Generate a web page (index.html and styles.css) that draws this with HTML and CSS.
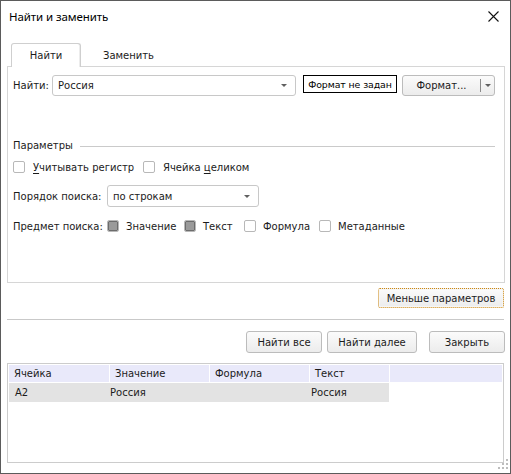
FILE: index.html
```html
<!DOCTYPE html>
<html lang="ru">
<head>
<meta charset="utf-8">
<title>Найти и заменить</title>
<link rel="stylesheet" href="styles.css">
</head>
<body>
<div class="window">
  <div class="titlebar">
    <span class="title">Найти и заменить</span>
    <svg class="close" width="11" height="11" viewBox="0 0 11 11"><path d="M0.5 0.5 L10.5 10.5 M10.5 0.5 L0.5 10.5" stroke="#111" stroke-width="1.1" fill="none"/></svg>
  </div>
  <div class="content">
    <div class="tabs">
      <div class="tab active">Найти</div>
      <div class="tab">Заменить</div>
    </div>
    <div class="panel">
      <div class="find-row">
        <span class="find-label">Найти:</span>
        <div class="combo find-combo"><span>Россия</span><i class="arrow"></i></div>
        <div class="format-box">Формат не задан</div>
        <div class="btn split-btn"><span class="split-main">Формат...</span><span class="split-drop"><i class="arrow"></i></span></div>
      </div>
      <div class="group-title"><span>Параметры</span><span class="group-line"></span></div>
      <div class="checks-row">
        <div class="check w130"><span class="cb"></span><span><u>У</u>читывать регистр</span></div>
        <div class="check"><span class="cb"></span><span>Ячейка <u>ц</u>еликом</span></div>
      </div>
      <div class="order-row">
        <span class="row-label">Порядок поиска:</span>
        <div class="combo order-combo"><span>по строкам</span><i class="arrow"></i></div>
      </div>
      <div class="subject-row">
        <span class="row-label">Предмет поиска:</span>
        <div class="check s1"><span class="cb checked"></span><span>Значение</span></div>
        <div class="check s2"><span class="cb checked"></span><span>Текст</span></div>
        <div class="check s3"><span class="cb"></span><span>Формула</span></div>
        <div class="check"><span class="cb"></span><span>Метаданные</span></div>
      </div>
    </div>
    <div class="less-row"><div class="btn less">Меньше параметров</div></div>
    <div class="sep"></div>
    <div class="actions">
      <div class="btn b-all">Найти все</div>
      <div class="btn b-next">Найти далее</div>
      <div class="btn b-close">Закрыть</div>
    </div>
    <div class="table">
      <div class="grid">
        <div class="th">Ячейка</div>
        <div class="th">Значение</div>
        <div class="th">Формула</div>
        <div class="th">Текст</div>
        <div class="th"></div>
        <div class="td c1">A2</div>
        <div class="td c2">Россия</div>
        <div class="td c3"></div>
        <div class="td c4">Россия</div>
      </div>
    </div>
  </div>
  <svg class="grip" width="10" height="10" viewBox="0 0 10 10" fill="#bdbdbd">
    <rect x="8" y="0" width="2" height="2"/>
    <rect x="4" y="4" width="2" height="2"/><rect x="8" y="4" width="2" height="2"/>
    <rect x="0" y="8" width="2" height="2"/><rect x="4" y="8" width="2" height="2"/><rect x="8" y="8" width="2" height="2"/>
  </svg>
</div>
</body>
</html>
```

FILE: styles.css
```css
* { box-sizing: border-box; }
html, body { margin: 0; padding: 0; background: #fff; }
body {
  font-family: "DejaVu Sans", Verdana, sans-serif;
  font-size: 10px;
  color: #1b1b1b;
}
u { text-decoration: underline; text-underline-offset: 2px; }

.window {
  width: 511px;
  height: 474px;
  border: 1px solid #5b5b5b;
  position: relative;
  background: #fff;
  overflow: hidden;
}

.titlebar {
  height: 30px;
  display: flex;
  align-items: center;
  justify-content: space-between;
  padding: 0 11px 0 8px;
}
.title {
  font-family: "Noto Sans", "Liberation Sans", sans-serif;
  font-size: 11.5px;
  letter-spacing: -0.1px;
  color: #000;
}
.close { display: block; }

.content { padding: 0 5px 0 6px; }

.tabs {
  display: flex;
  margin-top: 12px;
  height: 24px;
  margin-bottom: -1px;
  padding-left: 4px;
  position: relative;
  z-index: 1;
}
.tab {
  display: flex;
  align-items: center;
  padding-left: 22px;
  color: #1b1b1b;
}
.tab.active {
  width: 70px;
  padding: 0;
  justify-content: center;
  border: 1px solid #cfcfcf;
  border-bottom: none;
  border-radius: 3px 3px 0 0;
  background: #fff;
  box-shadow: inset -1px 0 0 #ececec;
}

.panel {
  height: 217px;
  border: 1px solid #d6d6d6;
  padding: 8px 0 0 5px;
}

.find-row {
  display: flex;
  align-items: flex-start;
  height: 21px;
}
.find-label { width: 39px; line-height: 21px; }

.combo {
  height: 21px;
  border: 1px solid #c8c8c8;
  border-radius: 3px;
  display: flex;
  align-items: center;
  justify-content: space-between;
  padding: 0 8px 0 5px;
  background: #fff;
}
.find-combo { width: 244px; }
.arrow {
  display: block;
  width: 0;
  height: 0;
  border-left: 3px solid transparent;
  border-right: 3px solid transparent;
  border-top: 3px solid #606060;
}

.format-box {
  margin-left: 7px;
  width: 94px;
  height: 18px;
  border: 1px solid #000;
  display: flex;
  align-items: center;
  justify-content: center;
  color: #000;
  white-space: nowrap;
  font-size: 9.4px;
  letter-spacing: -0.1px;
}

.btn {
  border: 1px solid #bcbcbc;
  border-radius: 3px;
  background: linear-gradient(#fbfbfb, #ececec);
  display: flex;
  align-items: center;
  justify-content: center;
  white-space: nowrap;
  color: #1b1b1b;
}
.split-btn {
  margin-left: 5px;
  width: 93px;
  height: 21px;
  justify-content: flex-start;
}
.split-main {
  flex: 1;
  text-align: center;
  height: 13px;
  line-height: 13px;
  border-right: 1px solid #8a8a8a;
}
.split-drop {
  width: 13px;
  display: flex;
  justify-content: center;
}

.group-title {
  margin-top: 43px;
  height: 13px;
  display: flex;
  align-items: center;
}
.group-line {
  flex: 1;
  height: 1px;
  background: #cacaca;
  margin: 2px 9px 0 7px;
}

.checks-row {
  margin-top: 8px;
  height: 14px;
  display: flex;
  align-items: center;
}
.check { display: flex; align-items: center; }
.w130 { width: 130px; }
.cb {
  flex: none;
  width: 12px;
  height: 12px;
  border: 1px solid #b8b8b8;
  border-radius: 2px;
  background: #fff;
  margin-right: 8px;
  display: flex;
  align-items: center;
  justify-content: center;
}
.cb.checked::after {
  content: "";
  display: block;
  width: 8px;
  height: 8px;
  border: 1px solid #6c6c6c;
  border-radius: 1px;
  background: #9a9a9a;
}

.order-row {
  margin-top: 11px;
  height: 22px;
  display: flex;
  align-items: center;
}
.row-label { width: 94px; flex: none; }
.order-combo { width: 152px; height: 22px; }

.subject-row {
  margin-top: 12px;
  height: 14px;
  display: flex;
  align-items: center;
}
.subject-row .cb { margin-right: 7px; }
.s1 { width: 77px; }
.s2 { width: 60px; }
.s3 { width: 75px; }

.less-row {
  display: flex;
  justify-content: flex-end;
  margin-top: 5px;
  padding-right: 1px;
}
.less {
  width: 126px;
  height: 20px;
  border: 1px dotted #d08a10;
  border-radius: 2px;
  box-shadow: inset 0 0 0 1px #f6f6f6;
}

.sep {
  margin: 11px 1px 0 0;
  height: 1px;
  background: #c9c9c9;
}

.actions {
  display: flex;
  justify-content: flex-end;
  margin-top: 11px;
}
.actions .btn { height: 22px; }
.b-all { width: 76px; }
.b-next { width: 90px; margin-left: 5px; }
.b-close { width: 76px; margin-left: 12px; }

.table {
  margin: 10px 1px 0 0;
  height: 100px;
  border: 1px solid #cccccc;
  padding: 1px;
}
.grid {
  display: grid;
  grid-template-columns: 100px 99px 99px 79px 1fr;
  grid-template-rows: 17px 19px;
  column-gap: 1px;
  row-gap: 1px;
}
.th {
  background: #e9e9fa;
  padding-left: 5px;
  display: flex;
  align-items: center;
  color: #1b1b1b;
}
.td {
  background: #e3e3e3;
  display: flex;
  align-items: center;
  color: #1b1b1b;
}
.td.c1 { padding-left: 6px; }
.td.c2 { padding-left: 1px; margin-left: -1px; }
.td.c3 { margin-left: -1px; }
.td.c4 { padding-left: 2px; margin-left: -1px; }

.grip {
  position: absolute;
  right: 2px;
  bottom: 4px;
}
```
